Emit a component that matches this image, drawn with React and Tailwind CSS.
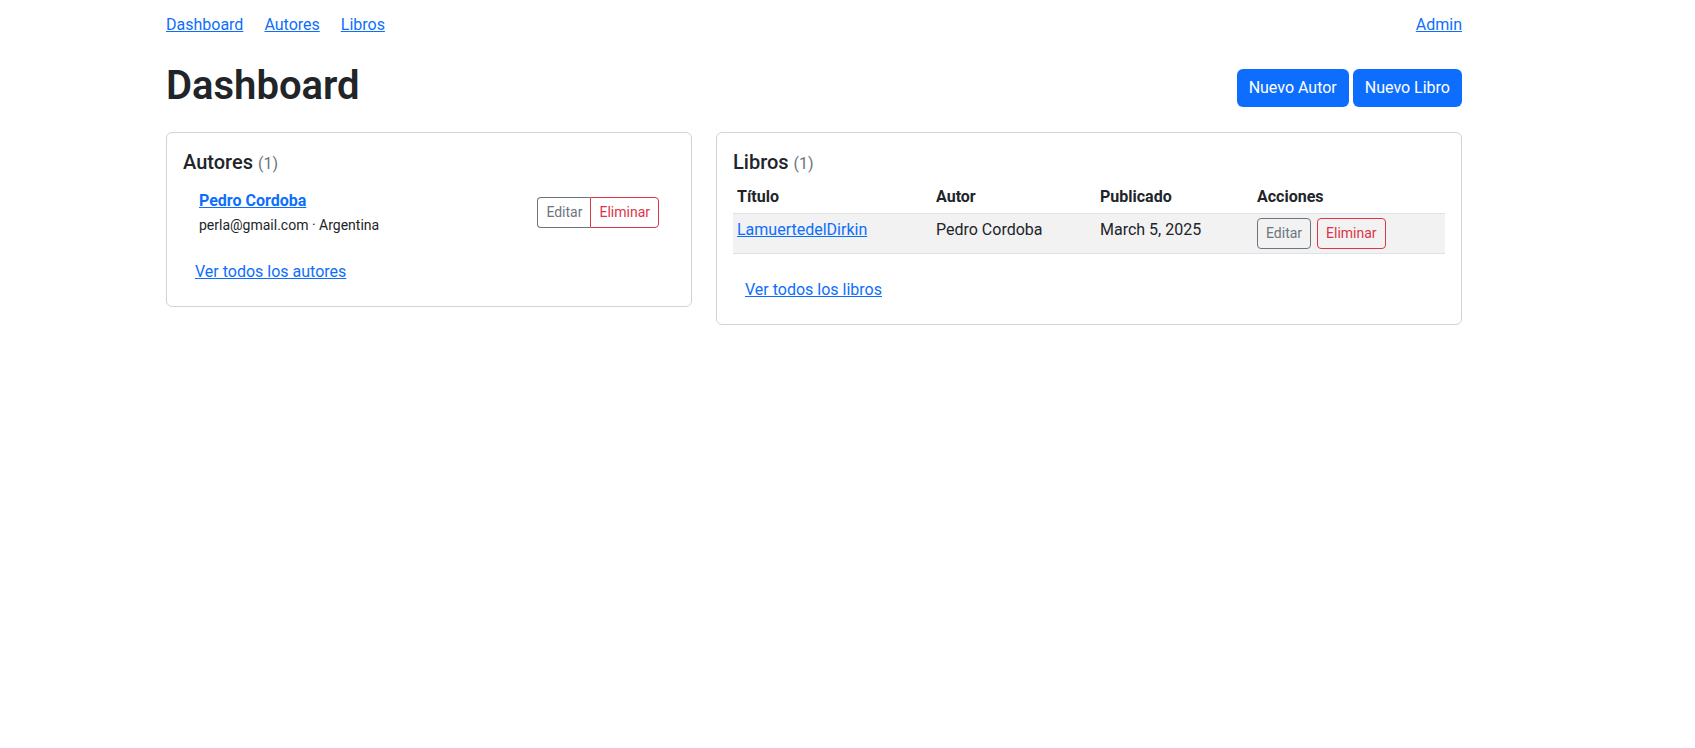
const linkCls = "text-[#0d6efd] underline";

const authors = [
  { name: "Pedro Cordoba", email: "perla@gmail.com", country: "Argentina" },
];

const books = [
  { title: "LamuertedelDirkin", author: "Pedro Cordoba", published: "March 5, 2025" },
];

const Count = ({ n }) => (
  <span className="text-base leading-none font-normal text-[#6c757d]">({n})</span>
);

export default function App() {
  return (
    <div className="min-h-screen bg-white font-['Roboto',sans-serif] text-base leading-6 text-[#212529]">
      <div className="w-[1296px] ml-[166px]">
        {/* Top nav */}
        <nav className="flex items-center justify-between pt-[13px] pb-[11px]">
          <div className="flex gap-[21px]">
            <a href="#" className={linkCls}>Dashboard</a>
            <a href="#" className={linkCls}>Autores</a>
            <a href="#" className={linkCls}>Libros</a>
          </div>
          <a href="#" className={linkCls}>Admin</a>
        </nav>

        {/* Page header */}
        <div className="flex items-start justify-between mt-[14px]">
          <h1 className="text-[40px] leading-[48px] font-semibold">Dashboard</h1>
          <div className="flex gap-1 mt-[7px]">
            <button className="h-[38px] px-3 rounded-md bg-[#0d6efd] text-white">Nuevo Autor</button>
            <button className="h-[38px] px-3 rounded-md bg-[#0d6efd] text-white">Nuevo Libro</button>
          </div>
        </div>

        <div className="grid grid-cols-[526px_746px] gap-6 items-start mt-[22px]">
          {/* Autores */}
          <div className="border border-[#d3d3d3] rounded-md p-4">
            <h5 className="text-xl leading-6 font-medium pt-px mb-[7px]">
              Autores <Count n={authors.length} />
            </h5>
            {authors.map((a) => (
              <div key={a.name} className="flex items-center justify-between px-4 py-2">
                <div>
                  <a href="#" className="block font-bold text-[#0d6efd] underline mb-[2px]">{a.name}</a>
                  <div className="text-sm leading-[21px]">
                    {a.email} · {a.country}
                  </div>
                </div>
                <div className="flex">
                  <button className="px-2 py-1 text-sm leading-[21px] border border-r-0 border-[#6c757d] text-[#6c757d] rounded-l">
                    Editar
                  </button>
                  <button className="px-2 py-1 text-sm leading-[21px] border border-[#dc3545] text-[#dc3545] rounded-r">
                    Eliminar
                  </button>
                </div>
              </div>
            ))}
            <div className="mt-[10px]">
              <a href="#" className="inline-block px-3 py-1.5 text-[#0d6efd] underline">Ver todos los autores</a>
            </div>
          </div>

          {/* Libros */}
          <div className="border border-[#d3d3d3] rounded-md p-4">
            <h5 className="text-xl leading-6 font-medium pt-px mb-[7px]">
              Libros <Count n={books.length} />
            </h5>
            <table className="w-full table-fixed border-collapse">
              <thead>
                <tr className="border-b border-[#dee2e6]">
                  <th className="w-[199px] p-1 text-left font-bold align-top">Título</th>
                  <th className="w-[164px] p-1 text-left font-bold align-top">Autor</th>
                  <th className="w-[157px] p-1 text-left font-bold align-top">Publicado</th>
                  <th className="p-1 text-left font-bold align-top">Acciones</th>
                </tr>
              </thead>
              <tbody>
                {books.map((b) => (
                  <tr key={b.title} className="bg-[#f2f2f2] border-b border-[#dee2e6]">
                    <td className="p-1 align-top">
                      <a href="#" className={linkCls}>{b.title}</a>
                    </td>
                    <td className="p-1 align-top">{b.author}</td>
                    <td className="p-1 align-top">{b.published}</td>
                    <td className="p-1 align-top">
                      <div className="flex gap-[6px]">
                        <button className="px-2 py-1 text-sm leading-[21px] border border-[#6c757d] text-[#6c757d] rounded">
                          Editar
                        </button>
                        <button className="px-2 py-1 text-sm leading-[21px] border border-[#dc3545] text-[#dc3545] rounded">
                          Eliminar
                        </button>
                      </div>
                    </td>
                  </tr>
                ))}
              </tbody>
            </table>
            <div className="mt-[18px]">
              <a href="#" className="inline-block px-3 py-1.5 text-[#0d6efd] underline">Ver todos los libros</a>
            </div>
          </div>
        </div>
      </div>
    </div>
  );
}
